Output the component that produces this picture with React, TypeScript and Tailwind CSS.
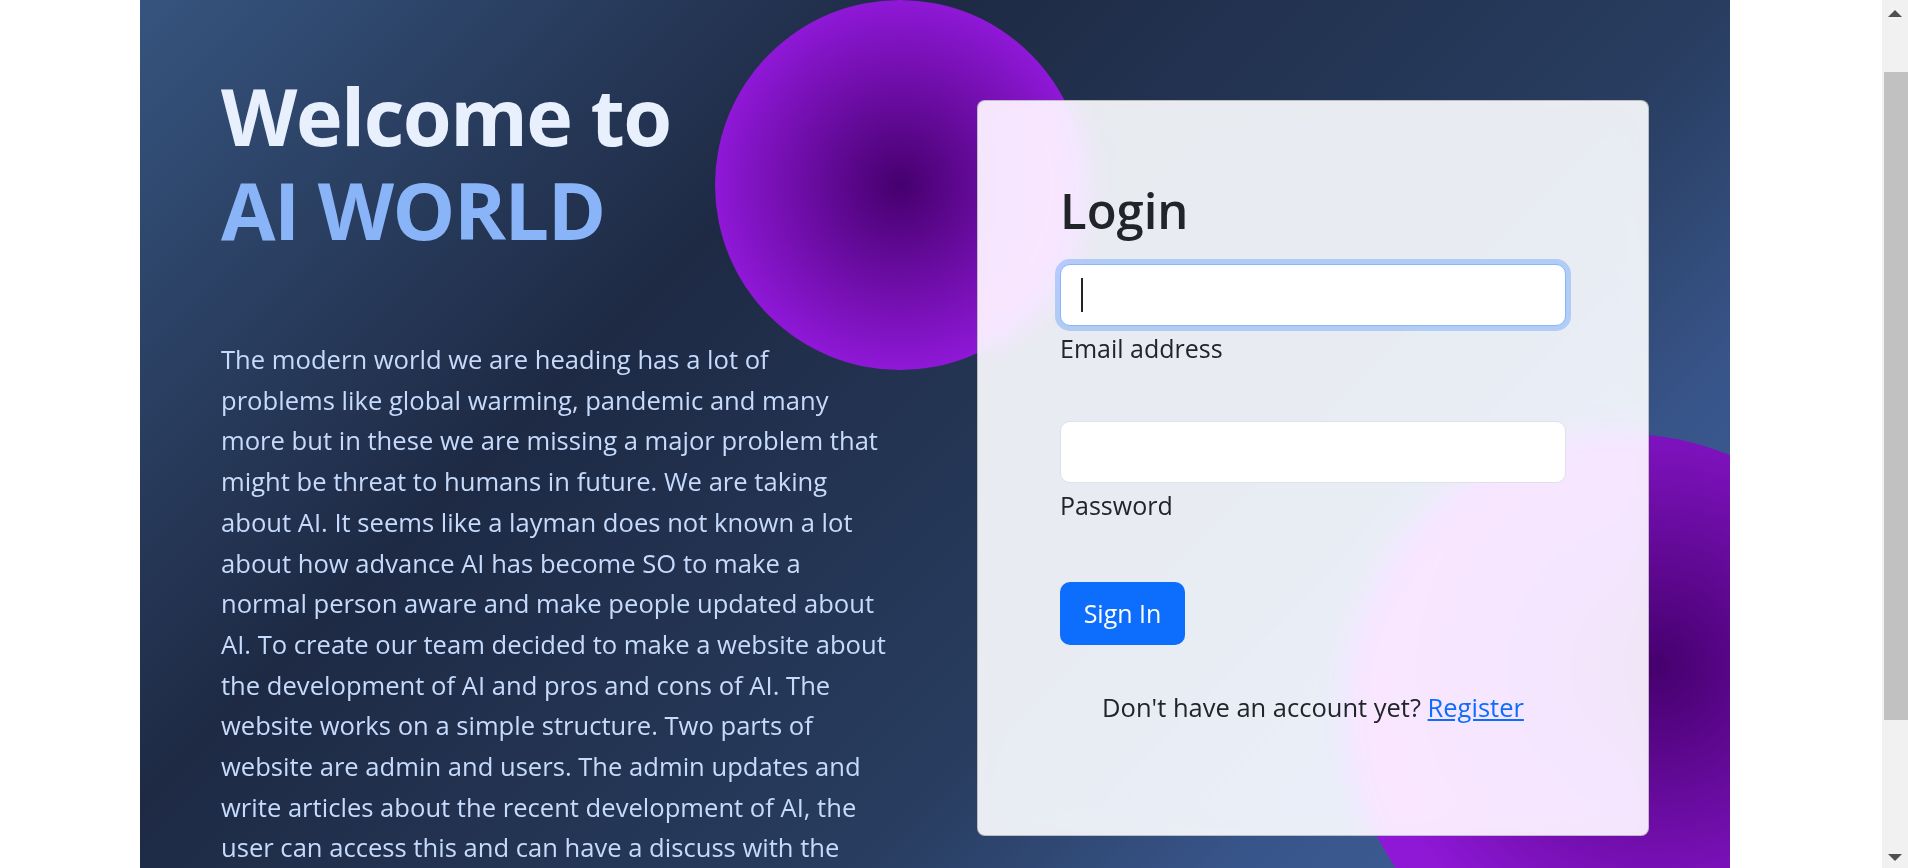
import React from "react";

const lines = [
  "The modern world we are heading has a lot of",
  "problems like global warming, pandemic and many",
  "more but in these we are missing a major problem that",
  "might be threat to humans in future. We are taking",
  "about AI. It seems like a layman does not known a lot",
  "about how advance AI has become SO to make a",
  "normal person aware and make people updated about",
  "AI. To create our team decided to make a website about",
  "the development of AI and pros and cons of AI. The",
  "website works on a simple structure. Two parts of",
  "website are admin and users. The admin updates and",
  "write articles about the recent development of AI, the",
  "user can access this and can have a discuss with the",
  "admin.",
];

const Scrollbar = () => {
  return (
    <div className="flex h-full w-[26px] shrink-0 flex-col bg-[#f1f1f1]">
      <div className="flex h-[26px] items-center justify-center">
        <svg width="14" height="7" viewBox="0 0 14 7">
          <polygon points="0,7 7,0 14,7" fill="#505050" />
        </svg>
      </div>
      <div className="ml-[2px] mt-[46px] h-[648px] bg-[#c1c1c1]" />
      <div className="flex-1" />
      <div className="flex h-[22px] items-center justify-center">
        <svg width="14" height="7" viewBox="0 0 14 7">
          <polygon points="0,0 14,0 7,7" fill="#505050" />
        </svg>
      </div>
    </div>
  );
};

const LoginCard = () => {
  return (
    <div className="relative z-10 mt-[100px] h-[736px] w-[672px] rounded-[8px] border border-black/20 bg-white/90 px-[82px] pt-[80px] text-[#212529] backdrop-blur-[16px] backdrop-saturate-[1.8]">
      <h1 className="mb-[24px] text-[49px] font-semibold leading-[1.2]">Login</h1>

      <div className="relative h-[62px] rounded-[10px] border border-[#86b7fe] bg-white shadow-[0_0_0_5px_rgba(13,110,253,0.25)]">
        <span className="absolute left-[20px] top-[13px] h-[34px] w-[2px] bg-[#212529]" />
      </div>
      <label className="mt-[4px] block text-[25px] leading-[1.5]">Email address</label>

      <div className="mt-[54px] h-[62px] rounded-[10px] border border-[#dee2e6] bg-white" />
      <label className="mt-[4px] block text-[25px] leading-[1.5]">Password</label>

      <button className="mt-[57px] flex h-[63px] w-[125px] items-center justify-center rounded-[10px] bg-[#0d6efd] text-[25px] text-white">
        Sign In
      </button>

      <p className="mt-[43px] text-center text-[25.5px] leading-[1.5]">
        Don't have an account yet?{" "}
        <a href="#" className="text-[#0d6efd] underline">
          Register
        </a>
      </p>
    </div>
  );
};

export default function App() {
  return (
    <div className="flex h-[868px] w-full overflow-hidden bg-white font-['Open_Sans',sans-serif]">
      <div className="min-w-0 flex-1">
        <div className="relative ml-[140px] min-h-[1800px] w-[1590px] overflow-hidden bg-[linear-gradient(135deg,#36547f_0px,#1e2a44_566px,#283d60_1125px,#38558a_1386px,#4266a0_1800px)]">
          {/* decorative blobs */}
          <div className="absolute left-[575px] top-0 h-[370px] w-[370px] rounded-full bg-[radial-gradient(circle_185px_at_center,#46006e,#8f18d7)]" />
          <div className="absolute left-[1207px] top-[434px] h-[554px] w-[554px] rounded-full bg-[radial-gradient(circle_300px_at_56%_42%,#46006e,#8f18d7)]" />

          <div className="relative flex justify-between px-[81px]">
            <div className="pt-[69px]">
              <h1 className="text-[79px] font-bold leading-[94px] tracking-[-1.5px] text-[#e8f0fe]">
                Welcome to
                <br />
                <span className="text-[#8ab4f8]">AI WORLD</span>
              </h1>
              <p className="mt-[83px] text-[25.6px] leading-[40.7px] text-[#c6dafc]">
                {lines.map((l, i) => (
                  <React.Fragment key={i}>
                    {l}
                    <br />
                  </React.Fragment>
                ))}
              </p>
            </div>
            <LoginCard />
          </div>
        </div>
      </div>
      <Scrollbar />
    </div>
  );
}
